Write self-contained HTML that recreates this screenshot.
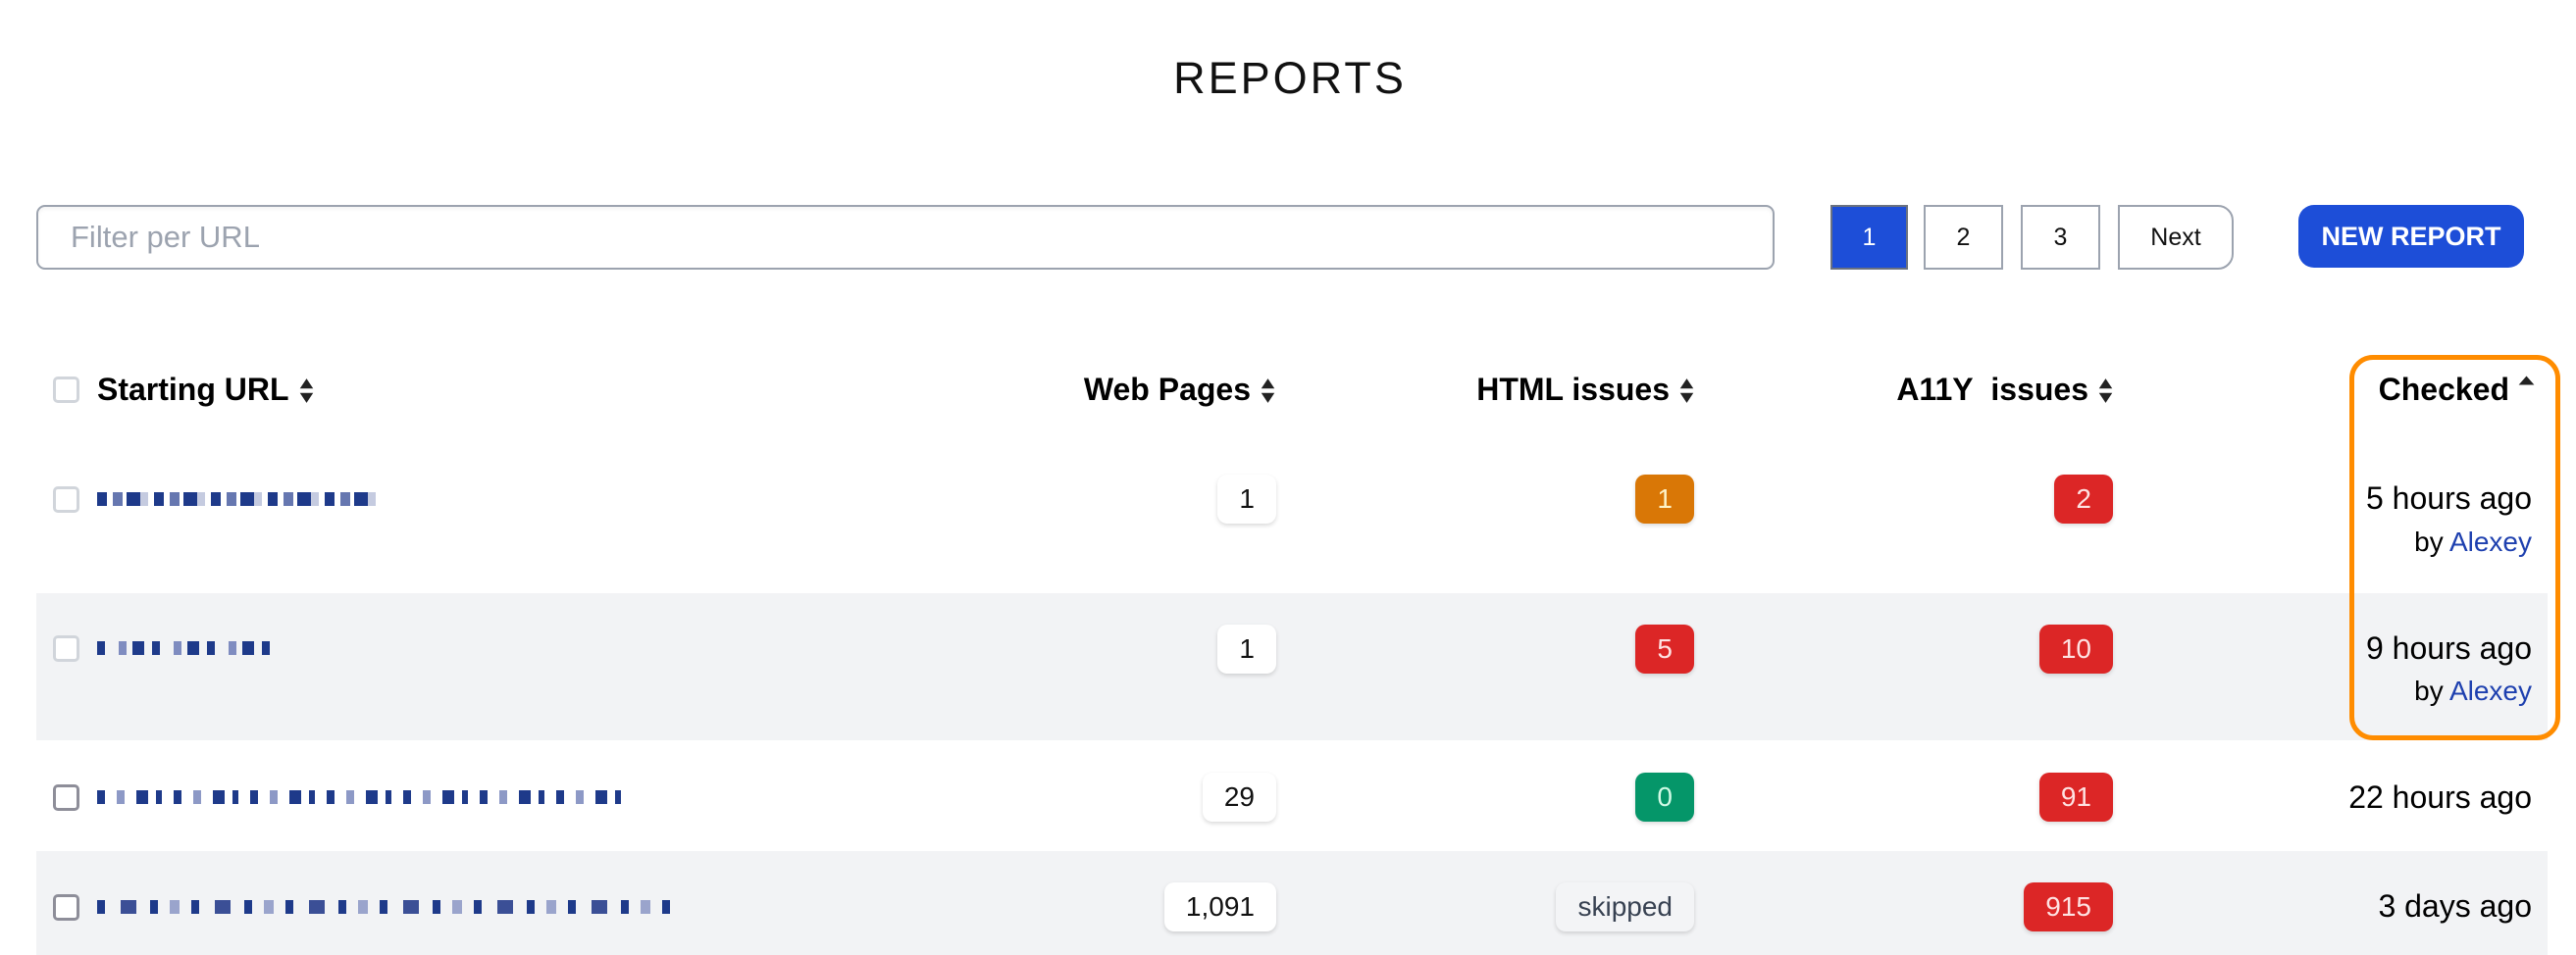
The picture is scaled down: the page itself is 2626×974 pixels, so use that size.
<!DOCTYPE html>
<html><head><meta charset="utf-8"><style>
*{box-sizing:border-box;margin:0;padding:0}
body{width:2626px;height:974px;background:#fff;font-family:"Liberation Sans",Arial,sans-serif;position:relative;overflow:hidden;color:#000}
.abs{position:absolute}
.title{left:0;width:2630px;top:54px;text-align:center;font-size:45px;letter-spacing:3px;color:#111}
.input{left:37px;top:209px;width:1772px;height:66px;border:2px solid #9ca3af;border-radius:9px;box-shadow:inset 0 2px 4px rgba(0,0,0,.05);font-size:31px;color:#9ca3af;padding-left:33px;line-height:62px}
.pg{top:209px;height:66px;border:2px solid #9ca3af;background:#fff;font-size:25px;text-align:center;line-height:62px;color:#111}
.btn{left:2343px;top:209px;width:230px;height:64px;background:#1d4ed8;border-radius:16px;color:#fff;font-weight:bold;font-size:27px;text-align:center;line-height:64px}
.rowbg{left:37px;width:2560px;background:#f2f3f5}
.th{top:378px;font-weight:bold;font-size:32px;line-height:38px;white-space:nowrap}
.sort{display:inline-block;width:17px;height:27px;vertical-align:-4px;margin-left:9px}
.cb{left:54px;width:27px;height:27px;border:3px solid #d1d5db;border-radius:5px;background:#fff}
.cb.d{border-color:#8e8e99}
.badge{height:50px;line-height:50px;border-radius:10px;font-size:28px;text-align:center;box-shadow:0 2px 4px rgba(0,0,0,.15);padding:0 22px}
.w{background:#fff;color:#111}
.o{background:#d97706;color:#fef3c7}
.r{background:#dc2626;color:#fee2e2}
.g{background:#059669;color:#d1fae5}
.s{background:#f3f4f6;color:#374151}
.t{font-size:32px;right:45px;text-align:right;white-space:nowrap}
.by{font-size:28px;right:45px;text-align:right}
.by span{color:#1e40af}
.url{left:99px;height:14px}
</style></head><body>
<div class="abs title">REPORTS</div>
<div class="abs input">Filter per URL</div>
<div class="abs pg" style="left:1866px;width:79px;background:#1d4ed8;color:#fff;border-color:#6b7280">1</div>
<div class="abs pg" style="left:1961px;width:81px">2</div>
<div class="abs pg" style="left:2060px;width:81px">3</div>
<div class="abs pg" style="left:2159px;width:118px;border-radius:0 16px 16px 0">Next</div>
<div class="abs btn">NEW REPORT</div>

<div class="abs rowbg" style="top:605px;height:150px"></div>
<div class="abs rowbg" style="top:868px;height:106px"></div>

<div class="abs cb" style="top:384px"></div>
<div class="abs th" style="left:99px">Starting URL<svg class="sort" viewBox="0 0 14 24"><path d="M7 1L13 10H1Z M7 23L13 14H1Z" fill="#222"/></svg></div>
<div class="abs th" style="right:1325px">Web Pages<svg class="sort" viewBox="0 0 14 24"><path d="M7 1L13 10H1Z M7 23L13 14H1Z" fill="#222"/></svg></div>
<div class="abs th" style="right:898px">HTML issues<svg class="sort" viewBox="0 0 14 24"><path d="M7 1L13 10H1Z M7 23L13 14H1Z" fill="#222"/></svg></div>
<div class="abs th" style="right:471px">A11Y&nbsp; issues<svg class="sort" viewBox="0 0 14 24"><path d="M7 1L13 10H1Z M7 23L13 14H1Z" fill="#222"/></svg></div>
<div class="abs th" style="right:42px">Checked<svg class="sort" viewBox="0 0 14 24" style="vertical-align:2px"><path d="M7 4L14 12H0Z" fill="#222"/></svg></div>

<!-- row 1 -->
<div class="abs cb" style="top:496px"></div>
<div class="abs url" style="top:502px;width:285px;background:repeating-linear-gradient(90deg,#1e3a8a 0 10px,#fff 10px 16px,#6677b0 16px 26px,#fff 26px 30px,#1e3a8a 30px 44px,#c5cbe0 44px 52px,#fff 52px 58px)"></div>
<div class="abs badge w" style="right:1325px;top:484px">1</div>
<div class="abs badge o" style="right:899px;top:484px">1</div>
<div class="abs badge r" style="right:472px;top:484px">2</div>
<div class="abs t" style="top:490px">5 hours ago</div>
<div class="abs by" style="top:537px">by <span>Alexey</span></div>

<!-- row 2 -->
<div class="abs cb" style="top:648px"></div>
<div class="abs url" style="top:654px;width:186px;background:repeating-linear-gradient(90deg,#1e3a8a 0 8px,#fff0 8px 22px,#7f8cc0 22px 30px,#fff0 30px 36px,#1e3a8a 36px 48px,#fff0 48px 56px)"></div>
<div class="abs badge w" style="right:1325px;top:637px">1</div>
<div class="abs badge r" style="right:899px;top:637px">5</div>
<div class="abs badge r" style="right:472px;top:637px">10</div>
<div class="abs t" style="top:643px">9 hours ago</div>
<div class="abs by" style="top:689px">by <span>Alexey</span></div>

<!-- row 3 -->
<div class="abs cb d" style="top:800px"></div>
<div class="abs url" style="top:806px;width:534px;background:repeating-linear-gradient(90deg,#1e3a8a 0 8px,#fff 8px 20px,#8d99c6 20px 28px,#fff 28px 40px,#1e3a8a 40px 52px,#fff 52px 60px,#1e3a8a 60px 66px,#fff 66px 78px)"></div>
<div class="abs badge w" style="right:1325px;top:788px">29</div>
<div class="abs badge g" style="right:899px;top:788px">0</div>
<div class="abs badge r" style="right:472px;top:788px">91</div>
<div class="abs t" style="top:795px">22 hours ago</div>

<!-- row 4 -->
<div class="abs cb d" style="top:912px"></div>
<div class="abs url" style="top:918px;width:598px;background:repeating-linear-gradient(90deg,#1e3a8a 0 8px,#fff0 8px 24px,#3b4f96 24px 40px,#fff0 40px 54px,#1e3a8a 54px 62px,#fff0 62px 74px,#9aa4cc 74px 84px,#fff0 84px 96px)"></div>
<div class="abs badge w" style="right:1325px;top:900px">1,091</div>
<div class="abs badge s" style="right:899px;top:900px">skipped</div>
<div class="abs badge r" style="right:472px;top:900px">915</div>
<div class="abs t" style="top:906px">3 days ago</div>

<div class="abs" style="left:2395px;top:362px;width:215px;height:393px;border:5px solid #ff8c00;border-radius:24px"></div>
</body></html>
